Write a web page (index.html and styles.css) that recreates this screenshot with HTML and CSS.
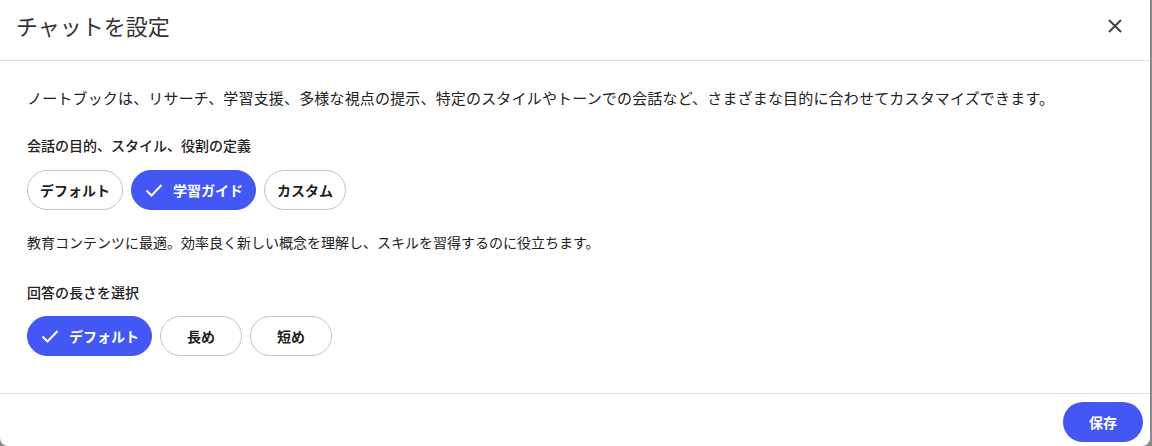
FILE: index.html
```html
<!DOCTYPE html>
<html lang="ja">
<head>
<meta charset="utf-8">
<link rel="stylesheet" href="styles.css">
</head>
<body>
<div class="dialog">
  <header class="dlg-head">
    <h1 class="title">チャットを設定</h1>
    <button class="close" aria-label="閉じる">
      <svg width="16" height="16" viewBox="0 0 16 16"><path d="M2 2L14 14M14 2L2 14" stroke="#444" stroke-width="2" fill="none"/></svg>
    </button>
  </header>
  <main class="dlg-body">
    <p class="intro">ノートブックは、リサーチ、学習支援、多様な視点の提示、特定のスタイルやトーンでの会話など、さまざまな目的に合わせてカスタマイズできます。</p>
    <p class="label label-1">会話の目的、スタイル、役割の定義</p>
    <div class="chips">
      <button class="chip">デフォルト</button>
      <button class="chip selected"><svg class="check" width="18" height="14" viewBox="0 0 18 14"><path d="M1.5 7.5L6.5 12.5L16.5 2" stroke="#fff" stroke-width="2" fill="none"/></svg>学習ガイド</button>
      <button class="chip">カスタム</button>
    </div>
    <p class="hint">教育コンテンツに最適。効率良く新しい概念を理解し、スキルを習得するのに役立ちます。</p>
    <p class="label label-2">回答の長さを選択</p>
    <div class="chips chips-2">
      <button class="chip selected"><svg class="check" width="18" height="14" viewBox="0 0 18 14"><path d="M1.5 7.5L6.5 12.5L16.5 2" stroke="#fff" stroke-width="2" fill="none"/></svg>デフォルト</button>
      <button class="chip wide">長め</button>
      <button class="chip wide">短め</button>
    </div>
  </main>
  <footer class="dlg-foot">
    <button class="save">保存</button>
  </footer>
</div>
</body>
</html>
```

FILE: styles.css
```css
* { box-sizing: border-box; }
html, body {
  margin: 0;
  padding: 0;
  background: #8a8a8a;
  height: 446px;
  overflow: hidden;
}
body {
  font-family: "Noto Sans CJK JP", "Noto Sans", sans-serif;
  color: #1f1f1f;
}
.dialog {
  width: 1150px;
  height: 446px;
  background: #fff;
  border-radius: 0 0 8px 8px;
  display: flex;
  flex-direction: column;
}
.dlg-head {
  height: 61px;
  border-bottom: 1px solid #e0e0e0;
  display: flex;
  align-items: flex-start;
  justify-content: space-between;
  padding: 10px 27px 0 16px;
}
.title {
  margin: 0;
  font-size: 22px;
  line-height: 30px;
  font-weight: 400;
  color: #333;
}
.close {
  margin-top: 8px;
  padding: 0;
  border: 0;
  background: none;
  width: 16px;
  height: 16px;
  display: flex;
}
.dlg-body {
  padding: 25px 27px 0 27px;
  height: 333px;
  border-bottom: 1px solid #e0e0e0;
}
p { margin: 0; }
.intro {
  font-size: 15px;
  letter-spacing: 0.17px;
  line-height: 24px;
  color: #222;
}
.label {
  font-size: 14px;
  line-height: 20px;
  font-weight: 500;
  color: #222;
}
.label-1 { margin-top: 25px; }
.label-2 { margin-top: 30px; }
.chips {
  display: flex;
  gap: 8px;
  margin-top: 15px;
}
.chips-2 { margin-top: 14px; }
.chip {
  height: 40px;
  padding: 0 12px;
  border: 1px solid #c4c4c4;
  border-radius: 20px;
  background: #fff;
  font-family: inherit;
  font-size: 14px;
  font-weight: 700;
  color: #1f1f1f;
  display: flex;
  align-items: center;
}
.chip.wide { padding: 0 26px; }
.chip.selected {
  background: #4357f5;
  border-color: #4357f5;
  color: #fff;
  padding: 0 12px 0 13px;
}
.check { margin-right: 10px; }
.hint {
  margin-top: 22px;
  font-size: 14px;
  line-height: 20px;
  color: #222;
}
.dlg-foot {
  display: flex;
  justify-content: flex-end;
  padding: 8px 7px 0 0;
}
.save {
  height: 40px;
  width: 80px;
  border: 0;
  border-radius: 20px;
  background: #4357f5;
  color: #fff;
  font-family: inherit;
  font-size: 14px;
  font-weight: 700;
}
```
